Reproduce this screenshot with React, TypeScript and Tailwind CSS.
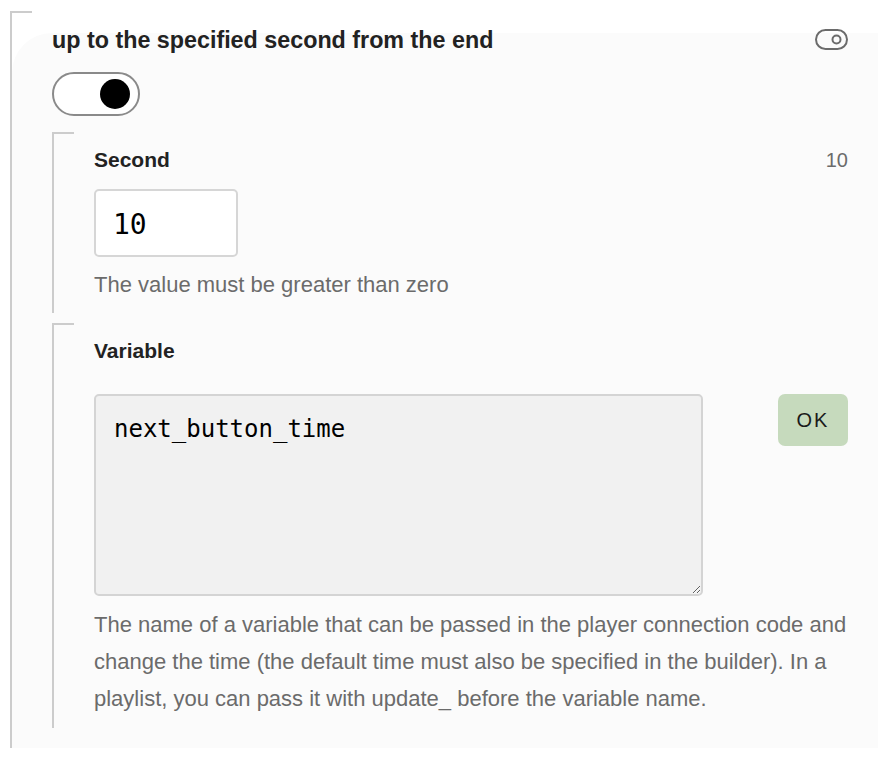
import React from "react";

const sans = { fontFamily: '"Liberation Sans", Arial, Helvetica, sans-serif' };
const mono = { fontFamily: '"DejaVu Sans Mono", "Liberation Mono", monospace' };

function Bracket({ children, className = "" }: { children: React.ReactNode; className?: string }) {
  return (
    <div className={"border-l-2 border-[#cccccc] " + className}>
      <div className="-ml-[2px] h-[2px] w-[22px] bg-[#cccccc]" />
      {children}
    </div>
  );
}

export default function App() {
  return (
    <div className="min-h-[758px] w-[878px] bg-white pl-[10px] pt-[11px]" style={sans}>
      <div className="relative h-[737px] border-l-2 border-[#cccccc]">
        <div className="absolute bottom-0 left-0 right-0 top-[22px] rounded-tl-[40px] bg-[#fbfbfb]" />
        <div className="relative -ml-[2px] h-[2px] w-[22px] bg-[#cccccc]" />
        <div className="relative pl-[40px] pr-[30px]">
          <div className="mt-[13px] flex items-center justify-between">
            <div className="text-[23.3px] font-bold leading-[28px] text-[#222222]">
              up to the specified second from the end
            </div>
            <svg width="34" height="22" viewBox="0 0 34 22" className="-mr-[1px]">
              <rect x="1" y="1" width="31" height="19" rx="9.5" fill="none" stroke="#6b6b6b" strokeWidth="2" />
              <circle cx="21.5" cy="10.5" r="4" fill="none" stroke="#6b6b6b" strokeWidth="2" />
            </svg>
          </div>

          <div className="mt-[18px] flex h-[44px] w-[88px] items-center justify-end rounded-full border-2 border-[#8a8a8a] bg-white pr-[8px]">
            <div className="h-[30px] w-[30px] rounded-full bg-black" />
          </div>

          <Bracket className="mt-[16px] pb-[10px]">
            <div className="pl-[40px]">
              <div className="mt-[13px] flex items-center justify-between leading-[26px]">
                <span className="text-[21px] font-bold text-[#222222]">Second</span>
                <span className="text-[20px] text-[#6b6b6b]">10</span>
              </div>
              <input
                readOnly
                value="10"
                className="mt-[16px] block h-[68px] w-[144px] rounded-[5px] border-2 border-[#d6d6d6] bg-white pl-[17px] pt-[3px] text-[28px] text-black outline-none"
                style={mono}
              />
              <div className="mt-[9px] text-[22px] leading-[37px] text-[#6b6b6b]">
                The value must be greater than zero
              </div>
            </div>
          </Bracket>

          <Bracket className="mt-[10px] pb-[11px]">
            <div className="pl-[40px]">
              <div className="mt-[13px] text-[21px] font-bold leading-[26px] text-[#222222]">Variable</div>
              <div className="mt-[30px] flex items-start justify-between">
                <textarea
                  readOnly
                  value="next_button_time"
                  className="block h-[202px] w-[609px] resize rounded-[5px] border-2 border-[#d4d4d4] bg-[#f1f1f1] pl-[18px] pt-[19px] text-[24px] leading-[28px] text-black outline-none"
                  style={mono}
                />
                <button className="flex h-[52px] w-[70px] items-center justify-center rounded-[7px] bg-[#c6dabd] text-[20px] tracking-[2px] text-[#1a1a1a]">
                  OK
                </button>
              </div>
              <p className="mt-[10px] text-[22px] leading-[37px] text-[#6b6b6b]">
                The name of a variable that can be passed in the player connection code and change the time
                (the default time must also be specified in the builder). In a playlist, you can pass it with
                update_ before the variable name.
              </p>
            </div>
          </Bracket>
        </div>
      </div>
    </div>
  );
}
